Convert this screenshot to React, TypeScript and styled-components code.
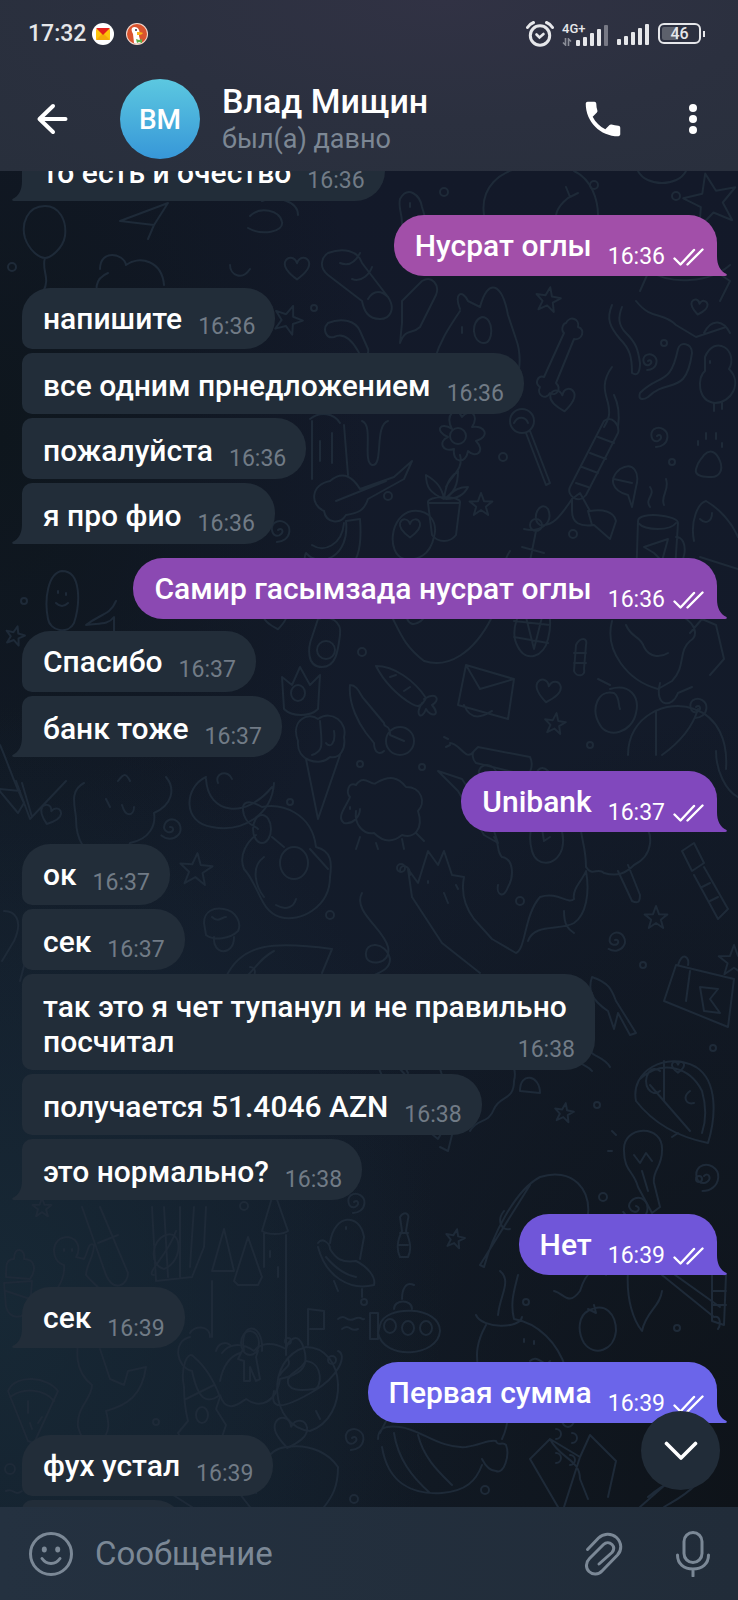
import React from "react";
import styled, { createGlobalStyle, css } from "styled-components";

const GlobalStyle = createGlobalStyle`
  *, *::before, *::after { box-sizing: border-box; }
  body {
    margin: 0;
    background: #111923;
    font-family: Roboto, "Noto Sans", sans-serif;
    color: #fff;
  }
  button { border: 0; padding: 0; background: none; color: inherit; font: inherit; cursor: pointer; }
`;

const Screen = styled.div`
  height: 100vh;
  display: flex;
  flex-direction: column;
  overflow: hidden;
`;

/* ---------- top ---------- */

const Top = styled.header`
  flex: none;
  height: 171px;
  background: radial-gradient(ellipse at 60% 0, #313244 0, #2b303f 50%, #282f3c 100%);
`;

const StatusBar = styled.div`
  height: 67px;
  padding: 0 33px 0 28px;
  display: flex;
  align-items: center;
  color: #e6e7ea;
`;

const Clock = styled.time`
  font-size: 23px;
  line-height: 28px;
  font-weight: 500;
`;

const AppIcons = styled.div`
  display: flex;
  gap: 12px;
  margin-left: 6px;
  flex: 1;
`;

const Indicators = styled.div`
  display: flex;
  align-items: center;
  gap: 8px;
`;

const Network = styled.div`
  display: flex;
  align-items: flex-end;
`;

const NetworkKind = styled.div`
  width: 14px;
  height: 24px;
  display: flex;
  flex-direction: column;
  justify-content: space-between;
  font-size: 13px;
  line-height: 14px;
  font-weight: 500;
  white-space: nowrap;
`;

const Battery = styled.div`
  display: flex;
  align-items: center;
  gap: 2px;
  &::after {
    content: "";
    width: 2px;
    height: 6px;
    background: #e6e7ea;
  }
`;

const BatteryBody = styled.div`
  width: 43px;
  height: 21px;
  border: 2px solid #e6e7ea;
  border-radius: 6px;
  background: linear-gradient(90deg, #5d616c 0 46%, transparent 46%) content-box;
  padding: 2px;
  font-size: 16px;
  line-height: 14px;
  font-weight: 500;
  text-align: center;
`;

const TitleBar = styled.div`
  height: 104px;
  padding: 0 29px 0 36px;
  display: flex;
  align-items: center;
`;

const IconButton = styled.button`
  flex: none;
  display: flex;
  align-items: center;
  justify-content: center;
`;

const Avatar = styled.div`
  flex: none;
  width: 80px;
  height: 80px;
  margin-left: 52px;
  border-radius: 50%;
  background: linear-gradient(#5cc8e0, #3797d8);
  display: flex;
  align-items: center;
  justify-content: center;
  font-size: 28px;
  font-weight: 500;
`;

const Peer = styled.div`
  flex: 1;
  margin-left: 22px;
  padding-top: 2px;
`;

const PeerName = styled.h1`
  margin: 0;
  font-size: 34px;
  line-height: 38px;
  font-weight: 500;
`;

const PeerStatus = styled.div`
  font-size: 27px;
  line-height: 38px;
  color: #7c8794;
`;

const TitleActions = styled.div`
  display: flex;
  align-items: center;
  gap: 51px;
`;

/* ---------- feed ---------- */

const Feed = styled.main`
  position: relative;
  flex: 1;
  min-height: 0;
  overflow: hidden;
  background:
    radial-gradient(ellipse 60% 45% at 0 85%, #172835 0, rgba(23, 40, 53, 0) 100%),
    radial-gradient(ellipse 70% 60% at 100% 100%, #0e1319 0, rgba(14, 19, 25, 0) 100%),
    radial-gradient(ellipse 50% 45% at 0 20%, #0e161d 0, rgba(14, 22, 29, 0) 100%),
    linear-gradient(#131929, #131d2a);
`;

const Wallpaper = styled.svg`
  position: absolute;
  inset: 0;
  width: 100%;
  height: 100%;
  fill: none;
  stroke: #1e2a38;
  stroke-width: 2;
  stroke-linecap: round;
  stroke-linejoin: round;
`;

const Messages = styled.ol`
  position: relative;
  list-style: none;
  margin: -31px 21px 0 22px;
  padding: 0;
  display: flex;
  flex-direction: column;
`;

type BubbleProps = { $own?: boolean; $first?: boolean; $last?: boolean; $fill?: string };

const Bubble = styled.li<BubbleProps>`
  position: relative;
  display: flow-root;
  min-height: 61px;
  max-width: calc(100% - ${(p) => (p.$own ? 60 : 122)}px);
  padding: ${(p) => (p.$first ? "13px 20px 13px 21px" : "15px 20px 11px 21px")};
  margin-top: 4px;
  align-self: flex-start;
  background: #222d39;
  border-radius: ${(p) => (p.$first ? 28 : 10)}px 30px 30px ${(p) => (p.$last ? 0 : 10)}px;
  font-size: 30px;
  line-height: 35px;
  font-weight: 500;
  ${(p) => p.$first && css`margin-top: 12px;`}
  ${(p) =>
    p.$own &&
    css`
      align-self: flex-end;
      margin-top: 14px;
      padding-right: 13px;
      background: ${p.$fill};
      border-radius: 30px 28px 0 30px;
    `}
  &:first-child { margin-top: 0; }
  &:empty { min-width: 163px; }
`;

const Meta = styled.span<{ $own?: boolean; $low?: boolean }>`
  float: right;
  display: flex;
  align-items: center;
  gap: 8px;
  margin: ${(p) => (p.$low ? "14px 0 -14px 16px" : "11px 0 -11px 16px")};
  height: 30px;
  font-size: 23px;
  line-height: 30px;
  font-weight: 400;
  color: ${(p) => (p.$own ? "#fff" : "#717b86")};
`;

const Tail = styled.svg<{ $own?: boolean; $fill: string }>`
  position: absolute;
  bottom: 0;
  fill: ${(p) => p.$fill};
  ${(p) => (p.$own ? "right: -10px;" : "left: -10px; transform: scaleX(-1);")}
`;

const ScrollDown = styled.button`
  position: absolute;
  right: 18px;
  bottom: 17px;
  width: 79px;
  height: 79px;
  border-radius: 50%;
  background: #212c38;
  display: flex;
  align-items: center;
  justify-content: center;
`;

/* ---------- composer ---------- */

const Composer = styled.form`
  flex: none;
  height: 93px;
  padding: 0 28px;
  display: flex;
  align-items: center;
  background: linear-gradient(90deg, #243140, #212c39);
  color: #7b8896;
`;

const Field = styled.input`
  flex: 1;
  min-width: 0;
  margin: 0 21px;
  padding: 0;
  border: 0;
  outline: 0;
  background: none;
  color: #fff;
  font: 400 33px/40px Roboto, "Noto Sans", sans-serif;
  &::placeholder { color: #7b8896; opacity: 1; }
`;

const ComposerActions = styled.div`
  display: flex;
  align-items: center;
  gap: 52px;
`;

/* ---------- icons ---------- */

const MailIcon = () => (
  <svg width="22" height="22" viewBox="0 0 22 22">
    <circle cx="11" cy="11" r="11" fill="#fff" />
    <rect x="4" y="6" width="14" height="11" rx="1" fill="#fdc30b" />
    <path d="M4 17 11 10l7 7z" fill="#f5a80a" />
    <path d="M4 5h14l-7 7z" fill="#e3211c" />
  </svg>
);

const DuckIcon = () => (
  <svg width="22" height="22" viewBox="0 0 22 22">
    <circle cx="11" cy="11" r="11" fill="#f3d9cf" />
    <circle cx="11" cy="11" r="10" fill="#d9532e" />
    <path d="M6 5c2-2 6-1 7 2 1 2 0 4 0 6l2 7c-3 1-6 1-7 0L7 11C6 9 5 7 6 5z" fill="#fff" />
    <path d="M11 9c2 0 5 0 6 1-1 2-4 2-6 2z" fill="#fbb418" />
    <path d="M10 16l3 1 3-1v4l-3-1-2 1z" fill="#5dae46" />
    <circle cx="10" cy="7" r="1" fill="#334" />
  </svg>
);

const AlarmIcon = () => (
  <svg width="28" height="28" viewBox="0 0 28 28" fill="none" stroke="#e6e7ea" strokeLinecap="round">
    <circle cx="14" cy="15.500" r="9.700" strokeWidth="3" />
    <path d="M10.500 14.500 13.500 17.500 17.500 14" strokeWidth="2.600" />
    <path d="M1.500 7.500C3 5 5 3.500 7.500 2.500M26.500 7.500C25 5 23 3.500 20.500 2.500" strokeWidth="3" />
  </svg>
);

const Signal = ({ level }: { level: number }) => (
  <svg width="33" height="22" viewBox="0 0 33 22" fill="#e6e7ea">
    {[6, 9, 13, 17, 21].map((h, i) => (
      <rect key={h} x={i * 7} y={22 - h} width="4" height={h} rx="1" opacity={i < level ? 1 : 0.4} />
    ))}
  </svg>
);

const DataArrows = () => (
  <svg width="10" height="8" viewBox="0 0 10 8" fill="none" stroke="#8b8e98" strokeWidth="1.600">
    <path d="M3.500 0v7L1 4.500M6.500 8V1L9 3.500" />
  </svg>
);

const BackIcon = () => (
  <svg width="32" height="32" viewBox="0 0 32 32" fill="none" stroke="#fff" strokeWidth="4" strokeLinecap="round" strokeLinejoin="round">
    <path d="M17 3 3.500 16 17 29M4 16h25.500" />
  </svg>
);

const PhoneIcon = () => (
  <svg width="46" height="46" viewBox="0 0 24 24" fill="#fff">
    <path d="M20 15.500c-1.250 0-2.450-.2-3.570-.57-.35-.11-.74-.03-1.020.24l-2.200 2.200c-2.830-1.440-5.150-3.750-6.590-6.590l2.200-2.210c.28-.26.36-.65.25-1C8.700 6.450 8.500 5.250 8.500 4c0-.55-.45-1-1-1H4c-.55 0-1 .45-1 1 0 9.390 7.610 17 17 17 .55 0 1-.45 1-1v-3.500c0-.55-.45-1-1-1z" />
  </svg>
);

const DotsIcon = () => (
  <svg width="32" height="32" viewBox="0 0 32 32" fill="#fff">
    <circle cx="16" cy="5" r="4" />
    <circle cx="16" cy="16" r="4" />
    <circle cx="16" cy="27" r="4" />
  </svg>
);

const ReadIcon = () => (
  <svg width="31" height="18" viewBox="0 0 31 18" fill="none" stroke="#fff" strokeWidth="2.400" strokeLinecap="round" strokeLinejoin="round">
    <path d="M1.500 10.500 7.500 16.500 21 2M14.500 16.500 29.500 1.500" />
  </svg>
);

const ChevronIcon = () => (
  <svg width="34" height="20" viewBox="0 0 34 20" fill="none" stroke="#fff" strokeWidth="3.600" strokeLinecap="round" strokeLinejoin="round">
    <path d="M2.500 2.500 17 17 31.500 2.500" />
  </svg>
);

const SmileIcon = () => (
  <svg width="46" height="46" viewBox="0 0 46 46" fill="none" stroke="currentColor" strokeWidth="3" strokeLinecap="round">
    <circle cx="23" cy="23" r="20.500" />
    <ellipse cx="16.300" cy="18.500" rx="2.500" ry="3" fill="currentColor" stroke="none" />
    <ellipse cx="29.700" cy="18.500" rx="2.500" ry="3" fill="currentColor" stroke="none" />
    <path d="M14 27.500c4.500 6.500 13.500 6.500 18 0" />
  </svg>
);

const ClipIcon = () => (
  <svg width="40" height="44" viewBox="0 0 40 44" fill="none" stroke="currentColor" strokeWidth="3" strokeLinecap="round" strokeLinejoin="round">
    <path d="M3.500 17.500 14.500 6C19 1.500 27 .5 32.500 5.500 38 11 38 18 33.500 23L18.500 38.500C14.500 43 8.500 43 5 39.500 1.500 36 1.500 30.500 5.500 26.500L19.500 12.500C22 10 25.500 10 28 12.500 30.500 15 30 18 28 20.500L15 32" />
  </svg>
);

const MicIcon = () => (
  <svg width="34" height="46" viewBox="0 0 34 46" fill="none" stroke="currentColor" strokeWidth="3" strokeLinecap="round">
    <rect x="8" y="1.500" width="18" height="30" rx="9" />
    <path d="M1.500 24C1.500 33 8 38 17 38s15.500-5 15.500-14M17 38v7" />
  </svg>
);

/* ---------- wallpaper doodles ---------- */

type Spot = [x: number, y: number, r: number, turn: number];

const stars: Spot[] = [
  [548, 129, 13, 10], [711, 30, 28, -12], [481, 334, 12, 0], [196, 699, 17, 5], [555, 553, 11, 8],
  [656, 747, 12, 0], [564, 942, 10, 10], [455, 1068, 10, 12], [42, 1037, 10, 0], [15, 465, 10, 15], [288, 149, 15, 20], [734, 790, 16, 0],
];
const hearts: Spot[] = [
  [563, 229, 12, -8], [548, 520, 12, 10], [297, 97, 12, 0], [50, 644, 10, 20], [699, 136, 8, 10], [276, 447, 12, -10], [290, 1262, 16, 10], [410, 357, 10, 0], [678, 896, 6, 0],
];
const spirals: Spot[] = [
  [657, 265, 11, 0], [170, 656, 12, 40], [696, 536, 11, 0], [354, 1031, 11, 0], [352, 1267, 12, 0],
  [615, 769, 11, 30], [278, 359, 12, 0], [704, 1005, 15, 0], [636, 1035, 14, 60], [485, 603, 12, 0], [648, 190, 9, 0],
];
const dots: Spot[] = [
  [314, 137, 3, 0], [594, 14, 4, 0], [444, 21, 4, 0], [676, 25, 4, 0], [664, 172, 3, 0], [503, 286, 4, 0], [388, 325, 4, 0],
  [672, 291, 3, 0], [362, 481, 4, 0], [360, 593, 3, 0], [422, 596, 3, 0], [590, 574, 3, 0], [401, 697, 4, 0], [520, 730, 4, 0],
  [330, 744, 4, 0], [290, 631, 3, 0], [643, 794, 3, 0], [244, 1035, 4, 0], [364, 1131, 3, 0], [526, 1131, 3, 0], [288, 1170, 3, 0],
  [156, 1251, 3, 0], [354, 1328, 4, 0], [485, 1319, 4, 0], [699, 1008, 3, 0], [603, 1026, 4, 0], [12, 96, 4, 0], [573, 363, 4, 0],
  [332, 1189, 4, 0], [10, 1298, 5, 0], [677, 1157, 3, 0], [24, 430, 3, 0], [713, 877, 3, 0], [597, 934, 3, 0],
];

const starPath = "M0-1 .25-.32 .95-.3 .4 .14 .6.83 0 .42-.6.83-.4.14-.95-.3-.25-.32Z";
const heartPath = "M0 .95C-.9.3-1.100-.1-1-.5-.8-1-.2-1 0-.4.2-1 .8-1 1-.5 1.100-.1.900.3 0 .95Z";
const spiralPath = "M0 0C.3-.3.6.2.1.45-.5.6-.7-.2-.3-.6.3-1 1-.5.95.1.9.7.4 1-.1 1";

const place = (d: string, list: Spot[]) =>
  list.map(([x, y, r, turn]) => (
    <path key={`${x}-${y}`} d={d} transform={`translate(${x} ${y}) rotate(${turn}) scale(${r})`} vectorEffect="non-scaling-stroke" />
  ));

const drawings = [
  // balloon, plane, snail and cactus behind the first messages
  "M45 35c-18 0-24 18-20 32 4 12 14 20 20 20s18-10 20-22c2-16-6-30-20-30zM45 87c-4 12 6 20-2 34M120 50l48-18-14 22zM154 54l-6 14M250 45c10-10 30-6 32 6 2 10-20 14-34 6M262 30c14-6 36 0 36 14",
  "M400 28c8-14 20-4 22 8 4 14 8 22-2 30-12 6-18-2-18-14 0-10-4-16-2-24zM410 32v4M414 46v4M408 54v4",
  "M484 44c-4-28 16-44 40-48M574 0c18 8 24 30 24 44M556 44c2-10 12-18 18-20M566 16l4 10 8-4M638 0c8 16 40 16 48 0",
  "M328 82c16-6 30-2 34 10l26 34c8 12 2 22-8 22-12 0-16-8-18-18l-34-26c-10-8-6-18 0-22zM340 92c10 4 16-2 20-10M352 108c10 4 18-6 20-12M368 128c6-10 14-8 20-2",
  // drumstick, nose, cow
  "M328 152c14-6 28-2 32 8l8 18c2 8-8 8-10 2-8-14-16-18-24-14-8 2-12-8-6-14zM402 130l20-20c10-6 18 4 14 14l-16 32c-8 8-14 0-20 16l2-20zM460 138c-6-16 2-20 8-8l12 6c8-30 22-24 28 8l8 24c6 16 4 36-2 48M460 140c-12 18-20 30-26 50M482 146c-12 4-10 26 2 26 10 0 10-26-2-26zM462 156v6",
  // bone
  "M566 152c4-8 14-4 12 4 8 2 4 14-4 12l-18 44c6 6 0 14-6 10-4 8-14 2-10-6-6-4-2-12 4-10l20-44c-4-4 0-10 2-10z",
  // worms and sticks
  "M612 134c-6 14-2 22 8 34 10 10 12 18 12 34 6 4 8-2 8-10-2-14-4-20-14-30-8-8-8-16-4-26M612 196c-12 16-6 28-4 36 2 10 2 14-4 24M618 256c2-14 0-24-4-32M640 222c20-20 30-6 38-44 2-8 14-6 14 4-6 44-24 24-44 44-6 4-10 2-8-4z",
  // chick and paw
  "M705 186c10-24 34-6 24 12 14 14 2 34-14 34-18-2-18-26-10-32zM710 190v2M714 232v8M722 232v6M704 284c6-6 12-4 16 6s-2 16-8 16-18 0-16-8c2-8 4-8 8-14zM698 270v4M706 262v6M716 262v6M722 272v4",
  // flower in a pot
  "M458 257a8 8 0 1 1 0 16 8 8 0 1 1 0-16zM452 258c-8-14 4-24 10-12 8-10 18-2 10 10 14-2 18 10 4 14 10 10 0 18-8 10-2 14-16 12-14-2-12 4-16-8-6-12-14-6-8-16 4-8zM460 284c4 14-8 20-14 32M428 332h32l-4 32c-6 8-18 8-24 0zM428 332c-2-8 34-8 32 0M444 328c-14-6-18-12-18-24 10 6 16 12 18 24zM444 328c2-16 6-22 14-28 0 14-4 22-14 28zM446 328c8-10 14-12 22-12-4 8-12 12-22 12z",
  // hanging scarf and guitar
  "M310 248c10-8 24-6 30 4M312 250v58M344 254l4 50M320 270v20M332 262v30M362 250c12 4 0 40 10 44 12 2 2-40 16-44M330 310c14-12 24-2 30 8l34-12 18-16-8 18-36 20c-4 12-10 14-22 16-6 10-20 8-22-4-14-6-14-26 6-30zM336 330l50-20",
  // lollipop, roll, fish
  "M522 238a12 12 0 1 1 0 24 12 12 0 1 1 0-24zM514 252c4-8 12-6 14 0M526 262l20 52 4-2-20-52M604 250c8-6 16 4 14 12l-32 62c-8 10-20 0-16-8zM598 266l16 6M590 282l16 6M582 296l16 6M576 312l12 4M572 328c-12 18-20 28-32 26-10-6 0-26 8-16 6 14-8 24-24 20M620 298c14-8 20 4 16 18l-4 20-4-12c-16-4-20-16-8-26zM614 308l18 4",
  // bananas, doughnut, anchor, bow, mug, pyramid
  "M306 382c14 16 44 4 40-32l14-2c2 26 0 50-26 58-18 2-34-12-28-24zM312 374c12 8 30 0 32-22M412 340c18-2 26 12 22 26-4 18-16 24-30 22-18-6-14-44 8-48zM536 348a6 6 0 1 1 0 12 6 6 0 1 1 0-12zM536 360l-10 50M510 380c-12 18 0 32 12 30 12 2 18-6 20-20M522 376l22 6M572 328l8-6 10 18c12-2 24 0 26 10l-6 18-16-14c-14 2-22-2-22-14zM588 340l4 14M638 350c0-10 40-6 40 2l-4 62c-6 8-34 6-38-2zM638 352c8 8 32 8 38 0M676 366c14 0 10 32-4 32M644 376l24-8-6 22-8-8zM650 336c-6-8 6-12 0-20M664 334c-4-10 6-14 2-26M694 370c-4-20 4-38 12-40 14 8 26 22 32 36M700 386l38 12M700 348c6 6 12 2 12-6",
  // potato, pineapple, sleeping bear, doughnut
  "M62 400c20 0 18 34 12 52-6 12-24 8-26-4-4-20 0-46 14-48zM58 420v2M66 422v2M56 432c4 4 8 4 12 0M116 430c-6 14-14 12-30 24 14-2 22 0 28-8v20M534 432c18 0 18 20 14 36-4 18-22 24-30 8-8-14-2-40 16-44zM514 450l36 4M514 466l34 6M524 438l10 40M544 438l-10 40M392 446c10 20 14 30 32 44 24 8 50-8 68-44M408 430c-6 24 6 32 22 10M576 474c4-8 12-8 10 0l-2 24c2 8-8 8-10 2zM574 482h12M574 492h12M612 450c-8 30 16 60 46 68l14-8c14-14 6-30 18-40 14-8-4-30-20-26M626 454c6 14 14 10 18 22 6 12 18 10 24 6M690 462l12-14 14 6 8 34-14 16M660 512c-6 24 12 26 18 10l14-6",
  // avocado and mushrooms between bubbles
  "M318 448c12-4 24 2 22 16-2 16-4 32-18 32-16 0-14-20-10-30zM326 470a9 9 0 1 1 0 18 9 9 0 1 1 0-18zM276 430l10 14 12-16",
  // crown, comet, carrot, envelope, cracker, peach
  "M282 506l10 8 8-18 10 18 10-10-2 34c-8 8-26 8-34 0zM298 514a7 8 0 1 1 0 16 7 8 0 1 1 0-16zM350 514c8 0 10 10 14 14l20 24c0 6 6 0 6 12l14 6M350 514c-2 20 10 40 16 48l8 10c0 10 6 12 10 8M400 556a13 13 0 1 1 0 28 13 13 0 1 1 0-28zM376 495c18 0 38 14 50 32-4 8-8 10-14 6-14-8-28-22-36-38zM390 506l6-2M404 520l6-4M424 528c14-8 16 2 8 6 10 12-2 12-6 4-4 12-12 6-4-6M466 494l48 14-6 40-50-14zM466 494l14 24 34-10M464 534c8 20 24 8 28 6M474 580l4-4 52 10c4 8 0 18-4 18l-50-12c-4-4-4-10-2-12zM474 580c-8 12-14-8-24-8M444 566l4 2M446 576l4-2M610 518c20-6 30 8 26 24-4 20-28 26-36 12-10-16-2-36 14-32 6 4 4 12 6 16M598 508l12 6",
  // watermelon slice, cauliflower, croissant, cone
  "M16 610l14 38 36-38M22 612l10 34M84 612c-16 8-8 26-8 36 0 22 10 36 24 38 14 6 26-2 30-14 20-4 26-18 24-30 18-8 22-24 12-36M106 628l4 8M122 634c4 14 12 10 12 2M118 610c6-8 8-8 12 0M206 606c-22 10-24 46 6 50 30 6 60-12 62-44M206 608c2 36 40 40 66 8M218 612c-4-10 10-14 14-4M298 570c-8-20 10-30 20-22 14-10 30 4 26 18 2 12-4 22-14 20-10 10-34 4-32-16zM306 588l12 60 22-64M320 550c2 24 4 30-8 34M326 572c4 6 10 0 8-12",
  // sheep
  "M356 614c8-12 16 2 20-2 14-8 22-6 30 4 16 0 20 16 12 24 6 18-4 28-16 24-12 10-22 4-28-2-10 2-20-8-18-22M356 614c-8-4-10 8-6 12-4 10-14 20-6 26 8 2 16-6 16-14M360 666l-4 12M376 672l2 6M402 668l2 10M416 662l8 8M350 636v2",
  // basketball and pencil
  "M628 584c0-40 40-56 66-46 24 8 34 32 32 60M656 540v44M698 538c-6 20-22 36-36 46M716 580c0 20 10 40 22 46M438 600l20 20 26 44 14 8-6-18-30-46zM494 666c6 6 2 14 8 20 12 2 12 20 6 30-4 12-12 8-10-2M548 600c-8-8-14 2-12 10M544 646c-14 0-16 20-12 34 4 16 24 16 30-2 4-16-4-34-18-32zM542 658l2 12 6-4",
  // tree, knight with goggles, mushroom, thread
  "M580 646c0 22 6 28 6 50 6 10 12 0 18 6 14 4 22 0 30-8 20-10 20-32 8-44M618 700l14 30c8 4 8-2 8-6l-12-30M262 636c-14-8-22-6-18 8 4 12 12 10 14 14M262 636c20-4 50 6 54 40 16 4 16 16 14 30 0 30-30 46-50 40-20-6-20-30-36-48-6-14 4-28 12-34M262 644a9 14 0 1 1 0 28 9 14 0 1 1 0-28zM294 676a14 16 0 1 1 0 32 14 16 0 1 1 0-32zM272 666l12 10M310 678l18 20M264 686c-14 10-8 30 0 40M276 734c10 6 18 2 20-6M204 752c0-12 10-16 20-14 12 2 18 14 14 22-8 8-24 10-32 4zM214 766c-2 18 20 20 20 0M212 746c6 6 10 0 14 0M362 722c-10 18 22 36 26 54 4 18-22 20-22 8-2-14 20-14 24 4 0 14-18 14-20 20",
  // fox
  "M412 726l-4-28 10 14 10-32 10 14 6-14 8 24 12 2c-4 20 4 34 10 42l18 20 24 14c10-4 8-38 24-56 18-6 28 8 34 2-2-10 8-18 12-28 4 22 0 44-12 52-14 8-40 0-46 18M412 726l30 46 38 30M428 710v2M444 722l4 10M456 714l2 4M564 740c0 14 4 18 10 22M400 700c0-8 10-6 10 4",
  // flashlight, violin
  "M682 680l12-8 10 20-12 8zM704 696l24 42-10 10-24-44M710 712l-8 4M718 726l-8 4M0 574c8 18 14 38 24 58l-6 10-20-24M0 618l20 2M4 740c10 0 20 8 10 30L2 790M28 780l-8 30",
  // shark, squid, packet
  "M226 806c16-34 48-36 106-28l-10 24M246 806c12-12 16-20 28-26M250 796a5 5 0 1 1 0 10M592 806c18 6 20 14 24 24l20 32-6 2-12-22-4 16-6-18c-18-12-20-22-16-34zM576 884c4 12 12 10 16 16M590 880c4 6 14 6 20 16M676 794l58 14-6 48-64-26zM690 800l-4 30M700 816l18 2-8 10 10 14-16-2zM678 794c4-14 12-8 10 0",
  // pizza slices
  "M636 930c-6-30 30-50 60-34 22 14 20 50 12 76-20-4-50-14-72-42zM640 908c22-20 50-12 62 12 4 14 4 30 0 42M650 914l40 46M664 890v40M660 920a9 12 0 1 1 0-20M690 920c-8 6-4 14 4 12M8 1220c8-18 40-14 50 0l-24 52-6-2zM10 1226c14-10 34-8 44 4M28 1230v12M42 1246l-4 6M30 1252l2 6",
  // bulb, tennis racket, cloud
  "M624 980c-2-26 40-28 38 0 0 16-10 20-8 32l6 24-8 6-14-26c-4-16-14-16-14-36zM634 984l6 8 6-10 6 8M642 1000l6 20M612 980h-4M616 964l-4-4M672 966l6-4M484 1096c8-30 30-76 56-90 30-10 56 10 46 50-8 24-30 38-46 32-8-10 8-20 12-4M484 1096l-4-2 50-80M504 1040c-8 10-2 20 6 18M472 898c8-14 20-12 24-4 10-10 22 0 18 16 0 20-14 14-20 28-6 16-16 8-24 22M520 920c0-20 20-16 20 2zM372 878c8 28 22 50 36 66l30 24 16-28-14-42M382 878l70 78M396 878l12 24M440 976l8 4 4-16M428 920c4-10 10-12 16 0",
  // test tube, gift, cupcake, gingerbread man
  "M82 1036l24 68c8 18 22 10 22-2l-28-66M98 1072l20-8M152 1036l4 74 36-4 12-30 2-40M164 1036l4 70M180 1036v70M194 1036l-4 60M6 1106c0-12 0-18 8-18 0-14 12-10 10 0 12 0 12 12 6 20zM4 1112l28-2-2 26c-8 14-20 12-24 0zM6 1120l24 8M64 1094c-14-4-14-28 4-28 12 2 12 14 8 20l8 2c4-6 4-18 10-14 0 12-8 20-8 30 8 10 18 14 14 22-12 2-16-10-26-8-12 6-14 18-22 16-4-10 14-20 12-40M64 1078v2M72 1078v2",
  // saturn
  "M166 1064c16-6 18 26-2 34-16-4-12-30 2-34zM154 1104c-10 0 14-20 22-44",
  // castle on a cloud
  "M212 1110v56M212 1100l12-42 10 42zM234 1110l14-44 14 40-4 8h-20zM262 1060l12-40 14 40c-6 4-20 4-26 0zM264 1062v34M286 1064v120M244 1180c-6-30 20-30 18 0M270 1080v6M278 1096v10M190 1162c4-8 20-8 20 4M190 1166c-18 4-14 30 2 34 6 28 14 34 28 24 6 20 20 8 26 4 14 10 30 4 34-20 18-4 30-10 24-30-6-20-16-8-18 0-14-8-26-6-32 2-14-10-26-6-32 2M216 1180c2-8 10-10 14-6",
  // flying saucer, candy
  "M330 1072c4-30 30-30 34-6l-4 22M318 1072c4-6 12 0 12 6 6 10 12 14 26 12 12 6 20 16 18 24-24 6-48-8-56-38M326 1086c10 12 20 18 30 20M334 1110l4 10M362 1118v8M346 1056v2M400 1046c4-6 10-4 8 2l-2 12c4 10 6 18 2 26h-8c-4-8-2-18 2-26zM400 1062h8M398 1074h10",
  // submarine
  "M380 1154c4-20 60-20 60 6-2 26-56 30-62 2zM370 1142h8v26h-8zM394 1138c0-10 18-10 18 0M402 1128c0-10 4-18 12-14M390 1148a6 7 0 1 1 0 14 6 7 0 1 1 0-14zM408 1150a6 7 0 1 1 0 14 6 7 0 1 1 0-14zM426 1150a6 7 0 1 1 0 14 6 7 0 1 1 0-14zM338 1148c8-6 8 4 16 0s8 2 10 0M342 1158c8-6 8 4 16 0",
  // sea serpent and tomato
  "M500 1100c12 10 0 24-2 44M518 1104c-4 16-8 28-4 44M476 1144c6 14 44 14 46 2M486 1154c-10 18-10 30-8 42l-10 10M514 1148c24 4 44 24 52 50M524 1168v3M534 1170v3M530 1190c8-8 14 8 20 0M588 1140c18-10 28 4 28 20-2 20-22 26-32 12-8-14-4-28 4-32zM594 1134l2 8-8-4M554 1120c10 2 14 16 26 0 6-20 18-28 26-16",
  // beach umbrella, tulip
  "M628 1100c-2 30 6 50 14 60 4-20 18-24 20-40M662 1104l52 42c8-2 6 10 4 12M664 1096l56 40M712 1100l14 4-2 50-12-4zM712 1120h14M712 1134h14",
  // mermaid tail, rocket, astronaut
  "M96 1166c-6-10-24-14-26-4-2 14 20 14 20 4M80 1160c-4 20-6 40 12 54 0 14-16 22-14 42 6 20 16 22 22 14 12-8 8-22 6-30 22-6 36-16 40-44l-18 4-4 14-14-6-10-30M184 1216c-4-20 4-38 10-30 12 10 20 24 26 40l-4 12 10 16-4 12M184 1216c0 16 2 26 4 34l-10 12 6 10h34M186 1228l28-14M202 1236a6 8 0 1 1 0 16 6 8 0 1 1 0-16zM220 1210c4-20 14-26 20-28M250 1160a9 12 0 1 1 0 24 9 12 0 1 1 0-24zM242 1180l-4 8 6 2v20h6v-14l6 14 4-2-4-22 2-6",
  // moon with flag
  "M306 1176c40 0 44 70 4 84-40-4-46-72-4-84zM308 1174v-36l16 2v18h-14M306 1190c18 2 16 28 8 28-14 2-28 2-26-10 6-10 10-6 18-18zM280 1204c4-8 12-8 8-16M274 1220c-4 18 6 20 40 0 24-14 34-36 24-40M316 1240l4 8",
  // whale
  "M380 1262c8-16 12-24 20-34M378 1268c0-10 6-14 22-12 20 2 40 22 66 20 14-2 24-8 30-6 2 6 6 0 10 4 4 10-2 30-10 26-8 0-12-8-14-12M382 1276c6 36 30 48 60 46 24-2 34-12 40-28M394 1262c4 26 18 44 36 60M418 1264c6 24 22 38 34 50M502 1268c14-30 0-60-20-66M470 1206c-6 28 12 42 22 18M452 1246v4M456 1250h6",
  // popcorn box
  "M530 1288l20-20 30 18-16 50M530 1288l28 48M550 1268c10 20 30 20 30 40l8 20M580 1286l10-22 26 26-8 36M556 1234c-10-10-4-20 4-10 6 6 2 14-4 10zM568 1242a6 7 0 1 1 0 14 6 7 0 1 1 0-14M556 1258a5 5 0 1 1 0 10M572 1262a5 5 0 1 1 0 10M556 1282a5 5 0 1 1 0 10M570 1284a5 5 0 1 1 0 10",
  // parrot by the scroll button
  "M648 1326c14-12 30-20 44-20M640 1336l34-30M664 1336c20-12 40-20 50-60M256 1322c4-24 10-44 30-46 26-4 44 8 52 20 0 20-6 30-14 40M236 1318l14 18M6 1320c8-4 8 6 16 0M170 1322l22 14",
  // cat, turtle and flowers at the top right
  "M640 120l16-36 20 10 24-4 30 20-10 20M636 130c16 20 26 10 40 24l20 12 30-10M650 100c20 14 60 12 80-6M704 162c8-16 20-12 26 0M100 98c0-20 24-16 26-4 14-10 36-4 38 20M108 102c-14 6-14 20-6 22M230 94c0 10 12 16 20 4",
];

const Doodles = () => (
  <Wallpaper viewBox="0 0 738 1336" preserveAspectRatio="xMidYMid slice" aria-hidden="true">
    {place(starPath, stars)}
    {place(heartPath, hearts)}
    {place(spiralPath, spirals)}
    {dots.map(([x, y, r]) => (
      <circle key={`${x}-${y}`} cx={x} cy={y} r={r} />
    ))}
    {drawings.map((d) => (
      <path key={d} d={d} />
    ))}
  </Wallpaper>
);

/* ---------- data ---------- */

type Item = { text: string; time: string; first?: boolean; last?: boolean; fill?: string };

const items: Item[] = [
  { text: "то есть и очество", time: "16:36", last: true },
  { text: "Нусрат оглы", time: "16:36", fill: "#a24fa9" },
  { text: "напишите", time: "16:36", first: true },
  { text: "все одним прнедложением", time: "16:36" },
  { text: "пожалуйста", time: "16:36" },
  { text: "я про фио", time: "16:36", last: true },
  { text: "Самир гасымзада нусрат оглы", time: "16:36", fill: "#8b49b2" },
  { text: "Спасибо", time: "16:37", first: true },
  { text: "банк тоже", time: "16:37", last: true },
  { text: "Unibank", time: "16:37", fill: "#8148bd" },
  { text: "ок", time: "16:37", first: true },
  { text: "сек", time: "16:37" },
  { text: "так это я чет тупанул и не правильно посчитал", time: "16:38" },
  { text: "получается 51.4046 AZN", time: "16:38" },
  { text: "это нормально?", time: "16:38", last: true },
  { text: "Нет", time: "16:39", fill: "#7056d9" },
  { text: "сек", time: "16:39", first: true, last: true },
  { text: "Первая сумма", time: "16:39", fill: "#6b65ea" },
  { text: "фух устал", time: "16:39", first: true },
];

const Message = ({ text, time, first, last, fill }: Item) => {
  const own = Boolean(fill);
  return (
    <Bubble $own={own} $first={first || own} $last={last} $fill={fill}>
      {text}
      <Meta $own={own} $low={own || (first && last)}>
        <time>{time}</time>
        {own && <ReadIcon />}
      </Meta>
      {(own || last) && (
        <Tail $own={own} $fill={fill ?? "#222d39"} width="11" height="20" viewBox="-1 0 11 20">
          <path d="M-1 0H0C0 9 3 15 9.500 18Q10.500 20 8 20H-1Z" />
        </Tail>
      )}
    </Bubble>
  );
};

export default function App() {
  return (
    <Screen>
      <GlobalStyle />
      <Top>
        <StatusBar>
          <Clock>17:32</Clock>
          <AppIcons>
            <MailIcon />
            <DuckIcon />
          </AppIcons>
          <Indicators>
            <AlarmIcon />
            <Network>
              <NetworkKind>
                4G+
                <DataArrows />
              </NetworkKind>
              <Signal level={4} />
            </Network>
            <Signal level={5} />
            <Battery>
              <BatteryBody>46</BatteryBody>
            </Battery>
          </Indicators>
        </StatusBar>
        <TitleBar>
          <IconButton type="button" aria-label="Назад">
            <BackIcon />
          </IconButton>
          <Avatar>ВМ</Avatar>
          <Peer>
            <PeerName>Влад Мищин</PeerName>
            <PeerStatus>был(а) давно</PeerStatus>
          </Peer>
          <TitleActions>
            <IconButton type="button" aria-label="Позвонить">
              <PhoneIcon />
            </IconButton>
            <IconButton type="button" aria-label="Меню">
              <DotsIcon />
            </IconButton>
          </TitleActions>
        </TitleBar>
      </Top>
      <Feed>
        <Doodles />
        <Messages>
          {items.map((item, i) => (
            <Message key={i} {...item} />
          ))}
          <Bubble />
        </Messages>
        <ScrollDown type="button" aria-label="Вниз">
          <ChevronIcon />
        </ScrollDown>
      </Feed>
      <Composer>
        <IconButton type="button" aria-label="Эмодзи">
          <SmileIcon />
        </IconButton>
        <Field type="text" placeholder="Сообщение" aria-label="Сообщение" />
        <ComposerActions>
          <IconButton type="button" aria-label="Прикрепить">
            <ClipIcon />
          </IconButton>
          <IconButton type="button" aria-label="Голосовое сообщение">
            <MicIcon />
          </IconButton>
        </ComposerActions>
      </Composer>
    </Screen>
  );
}
